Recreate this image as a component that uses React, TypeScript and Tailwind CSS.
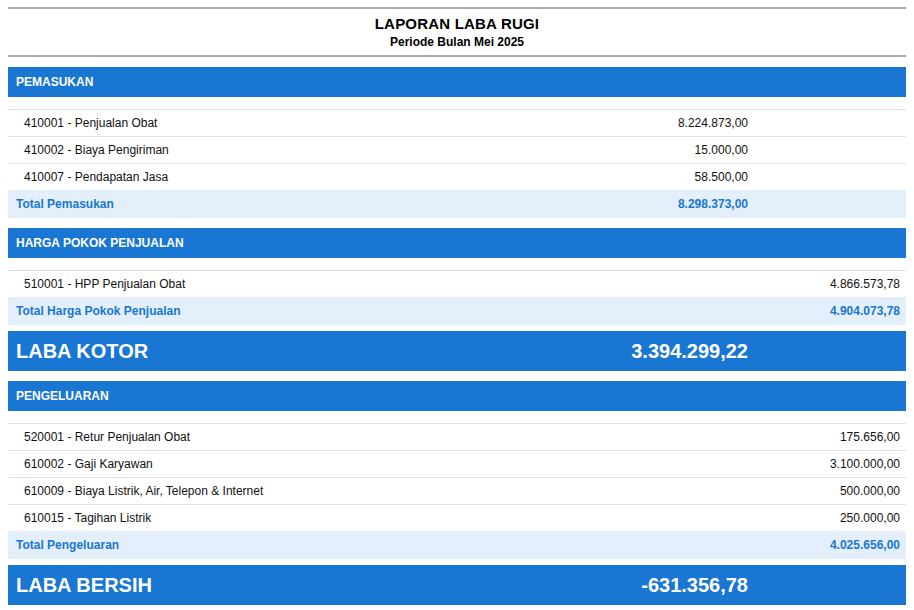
import React from "react";

type Row = { label: string; amount: string; col: 2 | 3 };

const font = "font-['Liberation_Sans',Arial,sans-serif]";

function SectionHeader({ title }: { title: string }) {
  return (
    <div className="h-[30px] bg-[#1976d2] text-white font-bold text-[12px] pl-2 flex items-center">
      {title}
    </div>
  );
}

function ItemRow({ row }: { row: Row }) {
  return (
    <div className="grid grid-cols-[1fr_200px_152px] h-[27px] border-t border-[#e3e3e3] text-[12px] text-[#111] items-center">
      <div className="pl-4">{row.label}</div>
      <div className="text-right pr-[6px]">{row.col === 2 ? row.amount : ""}</div>
      <div className="text-right pr-[6px]">{row.col === 3 ? row.amount : ""}</div>
    </div>
  );
}

function TotalRow({ label, amount, col }: { label: string; amount: string; col: 2 | 3 }) {
  return (
    <div className="grid grid-cols-[1fr_200px_152px] h-[28px] bg-[#e3f0fb] text-[12px] font-bold text-[#1976d2] items-center">
      <div className="pl-2">{label}</div>
      <div className="text-right pr-[6px]">{col === 2 ? amount : ""}</div>
      <div className="text-right pr-[6px]">{col === 3 ? amount : ""}</div>
    </div>
  );
}

function Section({ title, rows, total, totalLabel, col }: { title: string; rows: Row[]; total: string; totalLabel: string; col: 2 | 3 }) {
  return (
    <div>
      <SectionHeader title={title} />
      <div className="h-[12px]" />
      {rows.map((r) => (
        <ItemRow key={r.label} row={r} />
      ))}
      <TotalRow label={totalLabel} amount={total} col={col} />
    </div>
  );
}

function BigRow({ label, amount }: { label: string; amount: string }) {
  return (
    <div className="grid grid-cols-[1fr_200px_152px] h-[40px] bg-[#1976d2] text-white font-bold text-[20px] items-center">
      <div className="pl-2">{label}</div>
      <div className="text-right pr-[6px]">{amount}</div>
      <div />
    </div>
  );
}

export default function App() {
  return (
    <div className={`${font} bg-white min-h-[610px] px-2 pt-[7px]`}>
      <div className="border-y-2 border-[#a9a9a9] text-center text-black pt-[6px] pb-[5px]">
        <div className="text-[15px] leading-[18px] font-bold tracking-[0.2px]">LAPORAN LABA RUGI</div>
        <div className="text-[12px] leading-[16px] font-bold mt-px">Periode Bulan Mei 2025</div>
      </div>
      <div className="mt-[10px]">
        <Section
          title="PEMASUKAN"
          rows={[
            { label: "410001 - Penjualan Obat", amount: "8.224.873,00", col: 2 },
            { label: "410002 - Biaya Pengiriman", amount: "15.000,00", col: 2 },
            { label: "410007 - Pendapatan Jasa", amount: "58.500,00", col: 2 },
          ]}
          totalLabel="Total Pemasukan"
          total="8.298.373,00"
          col={2}
        />
      </div>
      <div className="mt-[10px]">
        <Section
          title="HARGA POKOK PENJUALAN"
          rows={[{ label: "510001 - HPP Penjualan Obat", amount: "4.866.573,78", col: 3 }]}
          totalLabel="Total Harga Pokok Penjualan"
          total="4.904.073,78"
          col={3}
        />
      </div>
      <div className="mt-[6px]">
        <BigRow label="LABA KOTOR" amount="3.394.299,22" />
      </div>
      <div className="mt-[10px]">
        <Section
          title="PENGELUARAN"
          rows={[
            { label: "520001 - Retur Penjualan Obat", amount: "175.656,00", col: 3 },
            { label: "610002 - Gaji Karyawan", amount: "3.100.000,00", col: 3 },
            { label: "610009 - Biaya Listrik, Air, Telepon & Internet", amount: "500.000,00", col: 3 },
            { label: "610015 - Tagihan Listrik", amount: "250.000,00", col: 3 },
          ]}
          totalLabel="Total Pengeluaran"
          total="4.025.656,00"
          col={3}
        />
      </div>
      <div className="mt-[6px]">
        <BigRow label="LABA BERSIH" amount="-631.356,78" />
      </div>
    </div>
  );
}
